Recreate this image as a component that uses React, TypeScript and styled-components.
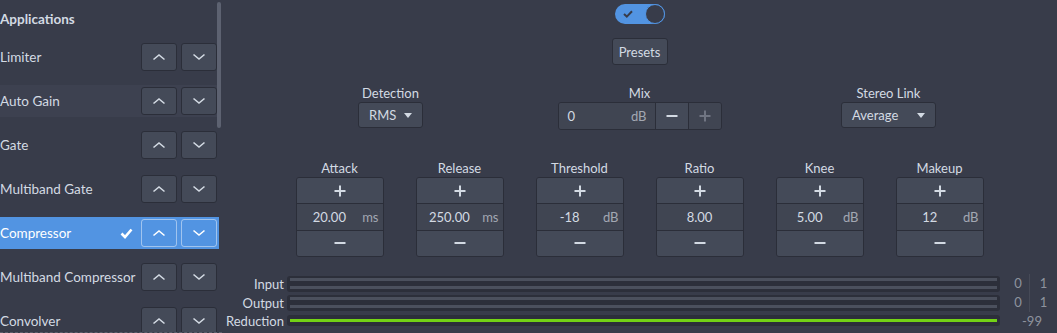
import styled, { createGlobalStyle } from "styled-components";

const colors = {
  bg: "#383c4a",
  base: "#404552",
  button: "#444a58",
  border: "#2b2e39",
  fg: "#d3dae3",
  dim: "#8e939e",
  selected: "#5294e2",
  trough: "#2c2f3a",
  bar: "#4b505d",
  green: "#73d216",
};

const GlobalStyle = createGlobalStyle`
  html, body {
    margin: 0;
    padding: 0;
    background: ${colors.bg};
    overflow: hidden;
  }
  body {
    font-family: Lato, "Noto Sans", sans-serif;
    font-size: 13px;
    color: ${colors.fg};
  }
`;

const Window = styled.div`
  display: flex;
  width: 1057px;
  height: 333px;
  background: ${colors.bg};
  overflow: hidden;
`;

/* ---------- sidebar ---------- */

const Sidebar = styled.div`
  position: relative;
  width: 222px;
  height: 333px;
  box-sizing: border-box;
  border-bottom: 1px dashed #5a5f6c;
  overflow: hidden;
  flex-shrink: 0;
  font-size: 13.5px;
`;

const Scrollbar = styled.div`
  position: absolute;
  left: 217px;
  top: 2px;
  width: 4px;
  height: 126px;
  border-radius: 2px;
  background: #5d6271;
`;

const Header = styled.div`
  height: 38px;
  line-height: 38px;
  font-weight: 700;
`;

const List = styled.div`
  display: flex;
  flex-direction: column;
  gap: 12px;
  padding-top: 3px;
`;

const Row = styled.div<{ $selected?: boolean; $hover?: boolean }>`
  display: flex;
  align-items: center;
  height: 32px;
  width: 219px;
  padding-right: 2px;
  box-sizing: border-box;
  gap: 4px;
  background: ${({ $selected, $hover }) =>
    $selected ? colors.selected : $hover ? "#3d4150" : "transparent"};
  color: ${({ $selected }) => ($selected ? "#ffffff" : colors.fg)};
`;

const RowName = styled.span`
  flex: 1;
  min-width: 0;
  white-space: nowrap;
`;

const Check = styled.svg`
  margin-right: 4px;
  flex-shrink: 0;
`;

const MoveButton = styled.button<{ $selected?: boolean }>`
  display: flex;
  align-items: center;
  justify-content: center;
  flex-shrink: 0;
  width: 36px;
  height: 28px;
  padding: 0;
  border-radius: 3px;
  border: 1px solid ${({ $selected }) => ($selected ? "rgba(255,255,255,0.45)" : colors.border)};
  background: ${({ $selected }) => ($selected ? "transparent" : colors.button)};
  color: ${({ $selected }) => ($selected ? "#ffffff" : colors.fg)};
`;

const Chevron = ({ up }: { up?: boolean }) => (
  <svg width="14" height="8" viewBox="0 0 14 8">
    <path
      d={up ? "M1.5 6.5 L7 2 L12.5 6.5" : "M1.5 1.5 L7 6 L12.5 1.5"}
      fill="none"
      stroke="currentColor"
      strokeWidth="1.6"
    />
  </svg>
);

/* ---------- main panel ---------- */

const Main = styled.div`
  flex: 1;
  display: flex;
  flex-direction: column;
  align-items: center;
  padding-top: 4px;
`;

const Switch = styled.div`
  position: relative;
  width: 50px;
  height: 20px;
  border-radius: 10px;
  background: ${colors.selected};
`;

const Knob = styled.div`
  position: absolute;
  right: 0;
  top: 0;
  width: 18px;
  height: 18px;
  border-radius: 50%;
  border: 1px solid ${colors.selected};
  background: ${colors.bg};
`;

const SwitchCheck = styled.svg`
  position: absolute;
  left: 8px;
  top: 6px;
`;

const PlainButton = styled.button`
  margin-top: 14px;
  height: 27px;
  padding: 0 5px;
  width: 56px;
  border-radius: 3px;
  border: 1px solid ${colors.border};
  background: ${colors.button};
  color: ${colors.fg};
  font-family: inherit;
  font-size: 13px;
`;

const TopGrid = styled.div`
  display: grid;
  grid-template-columns: repeat(3, 249px);
  margin-top: 20px;
`;

const Field = styled.div`
  display: flex;
  flex-direction: column;
  align-items: center;
  gap: 1px;
`;

const Label = styled.div`
  height: 16px;
  line-height: 16px;
  white-space: nowrap;
`;

const Combo = styled.div<{ $width: number }>`
  display: flex;
  align-items: center;
  justify-content: space-between;
  width: ${({ $width }) => $width}px;
  height: 26px;
  box-sizing: border-box;
  padding: 0 10px;
  border-radius: 3px;
  border: 1px solid ${colors.border};
  background: ${colors.button};
`;

const Arrow = styled.span`
  width: 0;
  height: 0;
  border-left: 4.5px solid transparent;
  border-right: 4.5px solid transparent;
  border-top: 5px solid ${colors.fg};
`;

const Spin = styled.div`
  display: flex;
  height: 26px;
  border-radius: 3px;
  border: 1px solid ${colors.border};
  overflow: hidden;
`;

const SpinEntry = styled.div`
  display: flex;
  align-items: center;
  justify-content: space-between;
  width: 96px;
  padding: 0 8px 0 9px;
  box-sizing: border-box;
  background: ${colors.base};
`;

const Unit = styled.span`
  color: #a3a8b2;
`;

const SpinButton = styled.div<{ $disabled?: boolean }>`
  display: flex;
  align-items: center;
  justify-content: center;
  width: 32px;
  border-left: 1px solid ${colors.border};
  background: ${({ $disabled }) => ($disabled ? colors.base : colors.button)};
  color: ${({ $disabled }) => ($disabled ? "#707582" : colors.fg)};
`;

const Glyph = ({ plus }: { plus?: boolean }) => (
  <svg width="12" height="12" viewBox="0 0 12 12">
    <rect x="0.5" y="5" width="11" height="2" fill="currentColor" />
    {plus && <rect x="5" y="0.5" width="2" height="11" fill="currentColor" />}
  </svg>
);

const KnobGrid = styled.div`
  display: grid;
  grid-template-columns: repeat(6, 88px);
  column-gap: 32px;
  margin-top: 30px;
`;

const VSpin = styled.div`
  display: flex;
  flex-direction: column;
  width: 88px;
  height: 80px;
  box-sizing: border-box;
  border-radius: 3px;
  border: 1px solid ${colors.border};
  overflow: hidden;
`;

const VSpinButton = styled.div<{ $bottom?: boolean }>`
  flex: 1;
  display: flex;
  align-items: center;
  justify-content: center;
  background: ${colors.button};
  border-top: ${({ $bottom }) => ($bottom ? `1px solid ${colors.border}` : "none")};
`;

const ValueRow = styled.div`
  flex: 1;
  display: flex;
  align-items: center;
  border-top: 1px solid ${colors.border};
  background: ${colors.base};
`;

const Value = styled.span`
  flex: 1;
  text-align: center;
`;

const ValueUnit = styled.span`
  padding-right: 4px;
  color: #a3a8b2;
`;

/* ---------- meters ---------- */

const Meters = styled.div`
  align-self: stretch;
  display: grid;
  grid-template-columns: 58px 1fr 54px;
  grid-template-rows: 19px 19px 17px;
  column-gap: 3px;
  margin-top: 17px;
  padding-left: 4px;
  align-items: center;
`;

const MeterLabel = styled.div`
  text-align: right;
  line-height: 14px;
  white-space: nowrap;
`;

const Trough = styled.div<{ $thin?: boolean }>`
  display: flex;
  flex-direction: column;
  justify-content: space-around;
  height: ${({ $thin }) => ($thin ? 11 : 16)}px;
  padding: 0 3px;
  border-radius: 3px;
  background: ${colors.trough};
`;

const Bar = styled.div<{ $green?: boolean }>`
  height: 3px;
  background: ${({ $green }) => ($green ? colors.green : colors.bar)};
`;

const Numbers = styled.div`
  display: grid;
  grid-template-columns: 1fr 1fr;
  color: ${colors.dim};
  line-height: 19px;
`;

const Num = styled.span<{ $left?: boolean }>`
  text-align: center;
  padding-left: ${({ $left }) => ($left ? 4 : 0)}px;
  border-right: ${({ $left }) => ($left ? "1px solid #464a57" : "none")};
`;

const Reduction = styled.div`
  color: ${colors.dim};
  text-align: center;
  padding-left: 4px;
`;

const plugins = [
  "Limiter",
  "Auto Gain",
  "Gate",
  "Multiband Gate",
  "Compressor",
  "Multiband Compressor",
  "Convolver",
];

const knobs = [
  { label: "Attack", value: "20.00", unit: "ms" },
  { label: "Release", value: "250.00", unit: "ms" },
  { label: "Threshold", value: "-18", unit: "dB" },
  { label: "Ratio", value: "8.00", unit: "" },
  { label: "Knee", value: "5.00", unit: "dB" },
  { label: "Makeup", value: "12", unit: "dB" },
];

export default function App() {
  return (
    <Window>
      <GlobalStyle />
      <Sidebar>
        <Header>Applications</Header>
        <List>
          {plugins.map((name) => {
            const selected = name === "Compressor";
            return (
              <Row key={name} $selected={selected} $hover={name === "Auto Gain"}>
                <RowName>{name}</RowName>
                {selected && (
                  <Check width="13" height="11" viewBox="0 0 13 11">
                    <path d="M1.5 5.5 L5 9 L11.5 1.5" fill="none" stroke="#fff" strokeWidth="2.6" />
                  </Check>
                )}
                <MoveButton $selected={selected}>
                  <Chevron up />
                </MoveButton>
                <MoveButton $selected={selected}>
                  <Chevron />
                </MoveButton>
              </Row>
            );
          })}
        </List>
        <Scrollbar />
      </Sidebar>

      <Main>
        <Switch>
          <SwitchCheck width="10" height="8" viewBox="0 0 10 8">
            <path d="M1 4 L3.8 6.6 L9 1.2" fill="none" stroke={colors.bg} strokeWidth="2" />
          </SwitchCheck>
          <Knob />
        </Switch>

        <PlainButton>Presets</PlainButton>

        <TopGrid>
          <Field>
            <Label>Detection</Label>
            <Combo $width={65}>
              RMS <Arrow />
            </Combo>
          </Field>
          <Field>
            <Label>Mix</Label>
            <Spin>
              <SpinEntry>
                <span>0</span>
                <Unit>dB</Unit>
              </SpinEntry>
              <SpinButton>
                <Glyph />
              </SpinButton>
              <SpinButton $disabled>
                <Glyph plus />
              </SpinButton>
            </Spin>
          </Field>
          <Field>
            <Label>Stereo Link</Label>
            <Combo $width={95}>
              Average <Arrow />
            </Combo>
          </Field>
        </TopGrid>

        <KnobGrid>
          {knobs.map((k) => (
            <Field key={k.label}>
              <Label>{k.label}</Label>
              <VSpin>
                <VSpinButton>
                  <Glyph plus />
                </VSpinButton>
                <ValueRow>
                  <Value>{k.value}</Value>
                  {k.unit && <ValueUnit>{k.unit}</ValueUnit>}
                </ValueRow>
                <VSpinButton $bottom>
                  <Glyph />
                </VSpinButton>
              </VSpin>
            </Field>
          ))}
        </KnobGrid>

        <Meters>
          <MeterLabel>Input</MeterLabel>
          <Trough>
            <Bar />
            <Bar />
          </Trough>
          <Numbers>
            <Num $left>0</Num>
            <Num>1</Num>
          </Numbers>

          <MeterLabel>Output</MeterLabel>
          <Trough>
            <Bar />
            <Bar />
          </Trough>
          <Numbers>
            <Num $left>0</Num>
            <Num>1</Num>
          </Numbers>

          <MeterLabel>Reduction</MeterLabel>
          <Trough $thin>
            <Bar $green />
          </Trough>
          <Reduction>-99</Reduction>
        </Meters>
      </Main>
    </Window>
  );
}
